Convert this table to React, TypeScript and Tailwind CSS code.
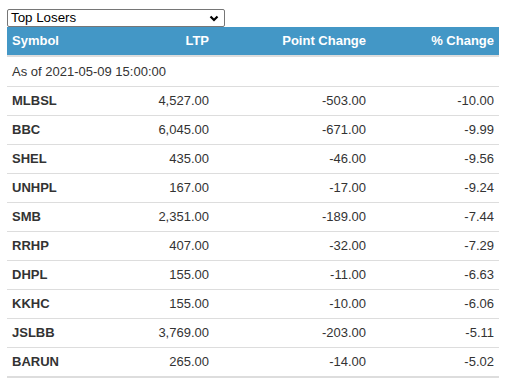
const rows = [
  { symbol: "MLBSL", ltp: "4,527.00", point: "-503.00", pct: "-10.00" },
  { symbol: "BBC", ltp: "6,045.00", point: "-671.00", pct: "-9.99" },
  { symbol: "SHEL", ltp: "435.00", point: "-46.00", pct: "-9.56" },
  { symbol: "UNHPL", ltp: "167.00", point: "-17.00", pct: "-9.24" },
  { symbol: "SMB", ltp: "2,351.00", point: "-189.00", pct: "-7.44" },
  { symbol: "RRHP", ltp: "407.00", point: "-32.00", pct: "-7.29" },
  { symbol: "DHPL", ltp: "155.00", point: "-11.00", pct: "-6.63" },
  { symbol: "KKHC", ltp: "155.00", point: "-10.00", pct: "-6.06" },
  { symbol: "JSLBB", ltp: "3,769.00", point: "-203.00", pct: "-5.11" },
  { symbol: "BARUN", ltp: "265.00", point: "-14.00", pct: "-5.02" },
];

const cols = "grid grid-cols-[105px_102px_157px_128px]";

export default function App() {
  return (
    <div className="min-h-screen bg-white pl-[7px] pt-[9px] font-['Liberation_Sans',Arial,sans-serif] text-[13px] text-[#333]">
      {/* Dropdown */}
      <div className="flex h-[18px] w-[218px] items-center justify-between rounded-[2px] border border-[#767676] pl-[3px] pr-[5px] text-[13.33px] leading-none text-black">
        <span>Top Losers</span>
        <svg width="10" height="7" viewBox="0 0 10 7" className="mt-[1px]">
          <path d="M1.5 1.5 L5 5 L8.5 1.5" fill="none" stroke="#000" strokeWidth="2.2" />
        </svg>
      </div>

      <div className="w-[492px]">
        {/* Header */}
        <div className={`${cols} h-[30px] items-center border-b-2 border-[#ddd] bg-[#4397c6] font-bold text-white`}>
          <div className="pl-[5px]">Symbol</div>
          <div className="pr-[5px] text-right">LTP</div>
          <div className="pr-[5px] text-right">Point Change</div>
          <div className="pr-[5px] text-right">% Change</div>
        </div>

        <div className="flex h-[29px] items-center pl-[5px]">As of 2021-05-09 15:00:00</div>

        {rows.map((r, i) => (
          <div
            key={r.symbol}
            className={`${cols} h-[29px] items-center border-t border-[#ddd] ${i === rows.length - 1 ? "h-[31px] border-b-2" : ""}`}
          >
            <div className="pl-[5px] font-bold">{r.symbol}</div>
            <div className="pr-[5px] text-right">{r.ltp}</div>
            <div className="pr-[5px] text-right">{r.point}</div>
            <div className="pr-[5px] text-right">{r.pct}</div>
          </div>
        ))}
      </div>
    </div>
  );
}
